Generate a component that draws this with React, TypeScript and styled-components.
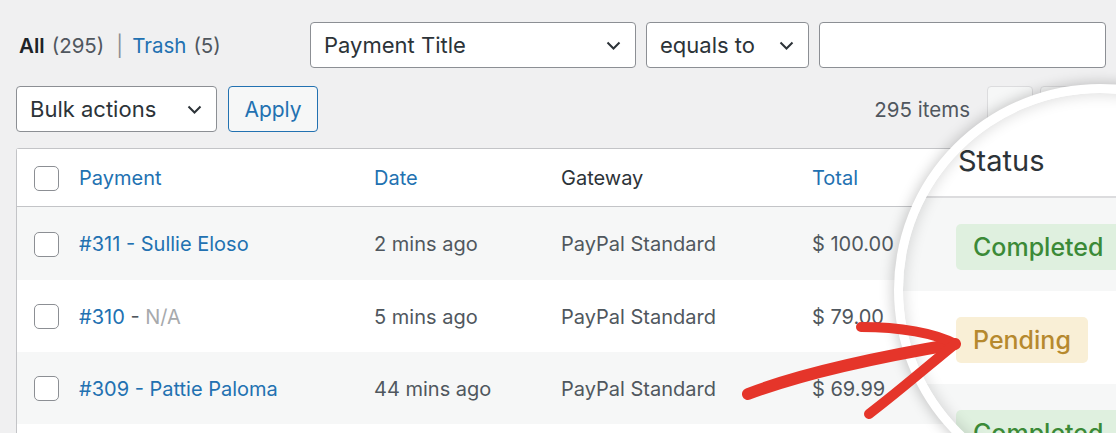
import React from 'react';
import styled, { createGlobalStyle } from 'styled-components';

const GlobalStyle = createGlobalStyle`
  html, body {
    margin: 0;
    padding: 0;
    background: #f0f0f1;
    overflow: hidden;
  }
  body {
    font-family: Inter, "Liberation Sans", Arial, sans-serif;
  }
`;

const Page = styled.div`
  position: relative;
  width: 1116px;
  height: 433px;
  overflow: hidden;
  box-sizing: border-box;
  padding: 22px 10px 0 16px;
  display: flex;
  flex-direction: column;
  color: #50575e;
  font-size: 20px;
`;

const Toolbar = styled.div<{ $gap?: number }>`
  display: flex;
  align-items: center;
  height: 46px;
  flex-shrink: 0;
  gap: ${p => p.$gap ?? 10}px;
  & + & {
    margin-top: 18px;
  }
`;

const Views = styled.div`
  display: flex;
  align-items: center;
  padding-left: 3px;
  color: #50575e;
  font-size: 20.5px;

  b {
    color: #1d2327;
    font-weight: 600;
    margin-right: 7px;
  }
  a {
    color: #2271b1;
    text-decoration: none;
    margin-right: 7px;
  }
  .sep {
    color: #8c8f94;
    margin: 0 9px 0 12px;
  }
`;

const Filters = styled.div`
  margin-left: auto;
  display: flex;
  gap: 10px;
`;

const SelectBox = styled.div<{ $width: number }>`
  width: ${p => p.$width}px;
  height: 46px;
  box-sizing: border-box;
  border: 1px solid #8c8f94;
  border-radius: 4px;
  background: #fff;
  display: flex;
  align-items: center;
  justify-content: space-between;
  padding: 0 14px 0 13px;
  color: #2c3338;
  font-size: 22px;
`;

const Input = styled.div<{ $width: number }>`
  width: ${p => p.$width}px;
  height: 46px;
  box-sizing: border-box;
  border: 1px solid #8c8f94;
  border-radius: 4px;
  background: #fff;
`;

const Button = styled.div`
  width: 90px;
  height: 46px;
  box-sizing: border-box;
  border: 1px solid #2271b1;
  border-radius: 4px;
  background: #f6f7f7;
  color: #2271b1;
  display: flex;
  align-items: center;
  justify-content: center;
  font-size: 21px;
`;

const Pager = styled.div`
  margin-left: auto;
  display: flex;
  align-items: center;
  gap: 7px;
  margin-right: 20px;

  span {
    margin-right: 10px;
    color: #50575e;
    font-size: 20.5px;
  }
`;

const PageButton = styled.div`
  width: 46px;
  height: 46px;
  box-sizing: border-box;
  border: 1px solid #dcdcde;
  border-radius: 4px;
  background: #f6f7f7;
`;

const Table = styled.div`
  flex: 1;
  margin-top: 16px;
  background: #fff;
  border: 1px solid #c3c4c7;
  border-bottom: none;
  border-radius: 3px 3px 0 0;
`;

const Row = styled.div<{ $head?: boolean; $striped?: boolean }>`
  display: grid;
  grid-template-columns: 62px 295px 187px 251px 1fr;
  align-items: center;
  height: ${p => (p.$head ? 58 : 72)}px;
  background: ${p => (p.$striped ? '#f6f7f7' : '#fff')};
  border-bottom: ${p => (p.$head ? '1px solid #c3c4c7' : 'none')};
  color: ${p => (p.$head ? '#2c3338' : '#50575e')};
  font-size: 20px;
  padding-top: 1px;
  box-sizing: border-box;
  &:nth-child(2) {
    height: 73px;
  }
`;

const Check = styled.div`
  width: 25px;
  height: 25px;
  box-sizing: border-box;
  margin-left: 17px;
  border: 1px solid #8c8f94;
  border-radius: 5px;
  background: #fff;
`;

const Link = styled.span`
  color: #2271b1;
`;

const Muted = styled.span`
  color: #a7aaad;
`;

const Magnifier = styled.div`
  position: absolute;
  left: 894px;
  top: 84px;
  width: 412px;
  height: 412px;
  box-sizing: border-box;
  border: 9px solid #fff;
  border-radius: 50%;
  overflow: hidden;
  background: #fff;
  box-shadow: 0 0 14px 1px rgba(0, 0, 0, 0.22);

  &::after {
    content: '';
    position: absolute;
    inset: 0;
    border-radius: 50%;
    box-shadow: inset 0 0 14px 2px rgba(0, 0, 0, 0.13);
    pointer-events: none;
  }
`;

const ZoomHead = styled.div`
  height: 105px;
  display: flex;
  align-items: flex-end;
  padding: 0 0 18px 55px;
  box-sizing: border-box;
  border-bottom: 2px solid #dcdcde;
  color: #2c3338;
  font-size: 29px;
`;

const ZoomRow = styled.div<{ $striped?: boolean }>`
  height: 93px;
  display: flex;
  align-items: center;
  padding: 4px 0 0 53px;
  box-sizing: border-box;
  background: ${p => (p.$striped ? '#f6f7f7' : '#fff')};
`;

const Badge = styled.div<{ $tone: 'green' | 'yellow' }>`
  height: 46px;
  display: flex;
  align-items: center;
  padding: 0 17px;
  border-radius: 5px;
  font-size: 25px;
  font-weight: 500;
  white-space: nowrap;
  background: ${p => (p.$tone === 'green' ? '#dff0df' : '#f9efd6')};
  color: ${p => (p.$tone === 'green' ? '#3b8a37' : '#b6892e')};
`;

const Arrow = styled.svg`
  position: absolute;
  left: 0;
  top: 0;
  pointer-events: none;
`;

const Chevron = () => (
  <svg width="15" height="9" viewBox="0 0 15 9">
    <path d="M1.5 1.5l6 6 6-6" fill="none" stroke="#2c3338" strokeWidth="2" />
  </svg>
);

const rows = [
  { payment: <Link>#311 - Sullie Eloso</Link>, date: '2 mins ago', total: '$ 100.00' },
  {
    payment: (
      <span>
        <Link>#310</Link> - <Muted>N/A</Muted>
      </span>
    ),
    date: '5 mins ago',
    total: '$ 79.00',
  },
  { payment: <Link>#309 - Pattie Paloma</Link>, date: '44 mins ago', total: '$ 69.99' },
];

export default function App() {
  return (
    <>
      <GlobalStyle />
      <Page>
        <Toolbar>
          <Views>
            <b>All</b> (295)
            <span className="sep">|</span>
            <a>Trash</a> (5)
          </Views>
          <Filters>
            <SelectBox $width={326}>
              Payment Title <Chevron />
            </SelectBox>
            <SelectBox $width={163}>
              equals to <Chevron />
            </SelectBox>
            <Input $width={287} />
          </Filters>
        </Toolbar>
        <Toolbar $gap={11}>
          <SelectBox $width={201}>
            Bulk actions <Chevron />
          </SelectBox>
          <Button>Apply</Button>
          <Pager>
            <span>295 items</span>
            <PageButton />
            <PageButton />
          </Pager>
        </Toolbar>

        <Table>
          <Row $head>
            <Check />
            <Link>Payment</Link>
            <Link>Date</Link>
            <span>Gateway</span>
            <Link>Total</Link>
          </Row>
          {rows.map((r, i) => (
            <Row key={i} $striped={i % 2 === 0}>
              <Check />
              {r.payment}
              <span>{r.date}</span>
              <span>PayPal Standard</span>
              <span>{r.total}</span>
            </Row>
          ))}
        </Table>

        <Magnifier>
          <ZoomHead>Status</ZoomHead>
          <ZoomRow $striped>
            <Badge $tone="green">Completed</Badge>
          </ZoomRow>
          <ZoomRow>
            <Badge $tone="yellow">Pending</Badge>
          </ZoomRow>
          <ZoomRow $striped>
            <Badge $tone="green">Completed</Badge>
          </ZoomRow>
        </Magnifier>

        <Arrow width="1116" height="433" viewBox="0 0 1116 433">
          <g fill="none" stroke="#e5352a" strokeLinecap="round" strokeLinejoin="round">
            <path d="M748 394 C 790 378, 860 360, 955 344" strokeWidth="12" />
            <path d="M861 327 C 900 327, 935 333, 955 344" strokeWidth="10" />
            <path d="M955 344 C 928 366, 898 392, 869 414" strokeWidth="10" />
          </g>
        </Arrow>
      </Page>
    </>
  );
}
